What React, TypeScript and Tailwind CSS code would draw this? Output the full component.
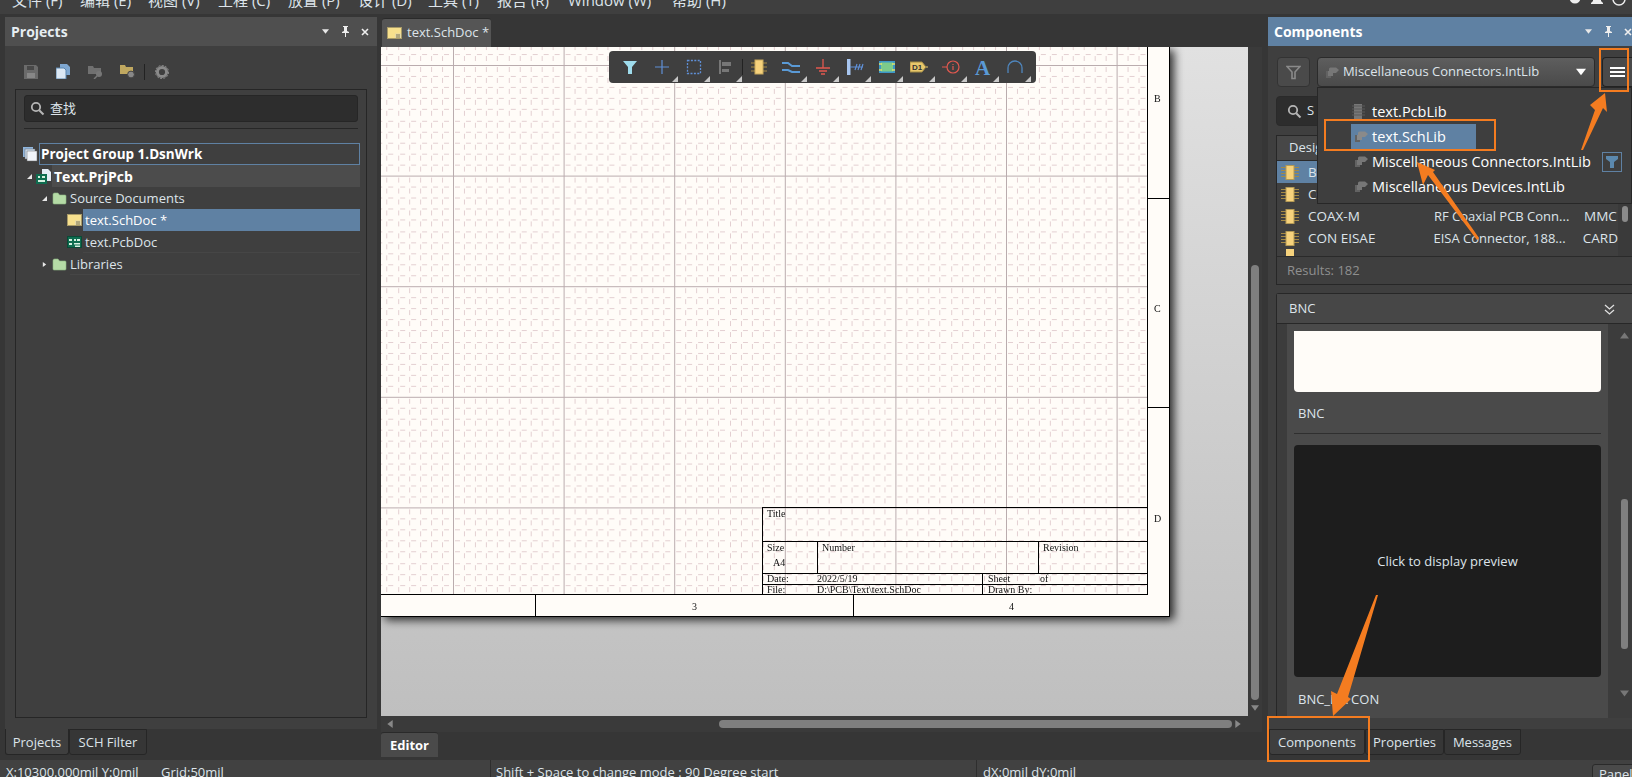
import React from "react";

const Tri = ({ dir, c = "#e8e8e8", s = 6 }: { dir: "down" | "right" | "se" | "left" | "up"; c?: string; s?: number }) => {
  const pts = { down: "0,1 6,1 3,5", right: "1,0 5,3 1,6", se: "6,0 6,6 0,6", left: "5,0 1,3 5,6", up: "0,5 6,5 3,1" }[dir];
  return (
    <svg width={s} height={s} viewBox="0 0 6 6" className="shrink-0">
      <polygon points={pts} fill={c} />
    </svg>
  );
};

const Folder = () => (
  <svg width="15" height="13" viewBox="0 0 15 13" className="shrink-0">
    <path d="M1 2.5 Q1 1 2.5 1 H6 L7.5 3 H13 Q14 3 14 4 V11 Q14 12 13 12 H2 Q1 12 1 11 Z" fill="#b5dba6" stroke="#8fb884" strokeWidth=".6" />
  </svg>
);
const SchDoc = ({ w = 15 }: { w?: number }) => (
  <svg width={w} height={(w * 12) / 15} viewBox="0 0 15 12" className="shrink-0">
    <rect x=".5" y=".5" width="14" height="11" fill="#f7e08d" stroke="#a89a68" />
    <rect x="8" y="6.5" width="6" height="4.5" fill="#d9d4bd" opacity=".6" />
    <path d="M9 8h4M9 10h4" stroke="#7d7550" strokeWidth="1" />
  </svg>
);
const PcbDoc = () => (
  <svg width="15" height="12" viewBox="0 0 15 12" className="shrink-0">
    <rect x=".5" y=".5" width="14" height="11" fill="#0f6d50" stroke="#0a4a36" />
    <path d="M2 3h3v2H2zM2 7h3v2H2zM7 3h2v2H7zM10 3h3v2h-3zM7 7h6v1.5H7zM8 9.5h5V11H8z" fill="#d6f0e0" />
  </svg>
);
const Lib = ({ c = "#777" }: { c?: string }) => (
  <svg width="15" height="13" viewBox="0 0 15 13" className="shrink-0">
    <path d="M1 5 H6 V12 H1 Z" fill="#626262" />
    <path d="M4 3 Q4 1.5 5.5 1.5 H11 L14 4 L11 7 H5.5 Q4 7 4 6 Z" fill={c} />
    <path d="M3 5 H8 V10 H3 Z" fill={c} />
  </svg>
);
const Part = () => (
  <svg width="18" height="15" viewBox="0 0 18 15" className="shrink-0">
    <path d="M0 2.5h18M0 5.5h18M0 8.5h18M0 11.5h18" stroke="#a58a45" strokeWidth="1" />
    <rect x="5" y=".5" width="8" height="14" fill="#f6d27c" stroke="#b59a55" />
  </svg>
);
const Search = () => (
  <svg width="15" height="15" viewBox="0 0 15 15" className="shrink-0">
    <circle cx="6" cy="6" r="4.2" fill="none" stroke="#b5b5b5" strokeWidth="1.8" />
    <path d="M9.2 9.2 13.5 13.5" stroke="#b5b5b5" strokeWidth="2" />
  </svg>
);
const Funnel = ({ c = "#8a8a8a" }: { c?: string }) => (
  <svg width="15" height="15" viewBox="0 0 15 15">
    <path d="M1 1.5h13L9 7v6.5H6V7Z" fill="none" stroke={c} strokeWidth="1.6" />
  </svg>
);
const HeadBtns = () => (
  <div className="flex items-center">
    <div className="flex w-[20px] justify-center"><Tri dir="down" s={7} /></div>
    <div className="flex w-[20px] justify-center">
      <svg width="9" height="11" viewBox="0 0 9 11"><path d="M2 0h5v1H6v4l2 1v1H5v4H4V7H1V6l2-1V1H2z" fill="#eee" /></svg>
    </div>
    <div className="flex w-[20px] justify-center">
      <svg width="8" height="8" viewBox="0 0 8 8"><path d="M1 1 7 7M7 1 1 7" stroke="#eee" strokeWidth="1.6" /></svg>
    </div>
  </div>
);

const toolbar: { el: React.ReactNode; tri: boolean }[] = [
  { tri: false, el: <path d="M2 3h14l-5 6v7H7V9Z" fill="#9fdcec" /> },
  { tri: true, el: <path d="M9 2v14M2 9h14" stroke="#5f8fd6" strokeWidth="1.2" /> },
  { tri: true, el: <rect x="2.5" y="2.5" width="13" height="13" fill="none" stroke="#5f8fd6" strokeWidth="1.3" strokeDasharray="2 1.4" /> },
  { tri: true, el: <g><path d="M3 2v14" stroke="#777" strokeWidth="2" /><path d="M5 4h9v4H5zM5 11h7v3H5z" fill="#777" /></g> },
  { tri: false, el: <g><path d="M1 5h16M1 9h16M1 13h16" stroke="#a58a45" /><rect x="5" y="2" width="8" height="14" fill="#f6d27c" stroke="#c7a85c" /></g> },
  { tri: true, el: <g fill="none" stroke="#5a9ad6" strokeWidth="2"><path d="M0 5h6l4 3h8" /><path d="M0 12h6l4 2h8" /></g> },
  { tri: true, el: <path d="M9 1v9M2 10h14M5 13h8M7 16h4" stroke="#e2584f" strokeWidth="1.3" fill="none" /> },
  { tri: true, el: <g><rect x="1" y="1" width="3.5" height="16" fill="#a8c6f0" /><path d="M4 9h13M9 12l2-6M12 12l2-6M15 12l2-6" stroke="#5f8fd6" strokeWidth="1.2" /></g> },
  { tri: true, el: <g><rect x="1" y="3" width="16" height="12" fill="#3d97c7" /><rect x="3" y="4.5" width="12" height="9" fill="#7ccb8a" /><path d="M1 6h3M1 12h3M14 6h3M14 12h3" stroke="#dfe36a" strokeWidth="1.4" /></g> },
  { tri: true, el: <g><path d="M0 4h12l4 5-4 5H0Z" fill="#e8c76b" stroke="#a18a45" /><path d="M16 9h2" stroke="#e8c76b" /><text x="2" y="12" fontSize="8" fontWeight="700" fill="#333" fontFamily="Liberation Sans">D1</text></g> },
  { tri: true, el: <g fill="none" stroke="#e2584f" strokeWidth="1.2"><circle cx="11" cy="9" r="6" /><path d="M0 9h5M11 6v1M11 8v4" /></g> },
  { tri: true, el: <text x="1" y="17" fontSize="21" fontWeight="700" fill="#5a9ad6" fontFamily="Liberation Serif">A</text> },
  { tri: true, el: <path d="M2 15V10a7 7 0 0 1 14 0v5" fill="none" stroke="#4f86bd" strokeWidth="1.3" /> },
];

const Sheet = () => {
  const minors = Array.from({ length: 10 }, (_, i) => i * 11.06);
  return (
    <svg width="789" height="570" viewBox="0 0 789 570" className="block shrink-0 bg-[#fffcf8] drop-shadow-[4px_3px_5px_rgba(0,0,0,0.8)]">
      <defs>
        <pattern id="g" x="72" y="18" width="110.6" height="110.6" patternUnits="userSpaceOnUse">
          {minors.map((m) => (
            <g key={m} stroke="#e3cfd1" strokeWidth="1" strokeDasharray="5 6.06" shapeRendering="crispEdges">
              {m > 0 && <line x1="0" x2="110.6" y1={m + 0.5} y2={m + 0.5} strokeDashoffset="-2" />}
              {m > 0 && <line y1="0" y2="110.6" x1={m + 0.5} x2={m + 0.5} strokeDashoffset="-2" />}
            </g>
          ))}
          <path d="M0.5 0V110.6M0 0.5H110.6" stroke="#baacae" strokeWidth="1" fill="none" shapeRendering="crispEdges" />
        </pattern>
      </defs>
      <rect x="0" y="0" width="767" height="547" fill="url(#g)" />
      <g stroke="#000" strokeWidth="1" fill="none" shapeRendering="crispEdges">
        <path d="M766.5 0V547.5H0" />
        <path d="M788.5 0V569.5H0" />
        <path d="M766.5 151.5H789M766.5 360.5H789" />
        <path d="M154.5 547V570M472.5 547V570" />
        <rect x="381.5" y="460.5" width="385" height="87" fill="none" />
        <path d="M381.5 494.5H766.5M381.5 526.5H766.5M381.5 537.5H766.5M436.5 494.5V526.5M657.5 494.5V526.5M601.5 526.5V547.5" />
      </g>
      <g fontFamily="Liberation Serif" fontSize="10" fill="#111">
        <text x="773" y="55">B</text>
        <text x="773" y="265">C</text>
        <text x="773" y="475">D</text>
        <text x="311" y="563">3</text>
        <text x="628" y="563">4</text>
        <text x="386" y="470">Title</text>
        <text x="386" y="504">Size</text>
        <text x="392" y="519">A4</text>
        <text x="441" y="504">Number</text>
        <text x="662" y="504">Revision</text>
        <text x="386" y="535">Date:</text>
        <text x="436" y="535">2022/5/19</text>
        <text x="607" y="535">Sheet</text>
        <text x="659" y="535">of</text>
        <text x="386" y="546">File:</text>
        <text x="436" y="546">D:\PCB\Text\text.SchDoc</text>
        <text x="607" y="546">Drawn By:</text>
      </g>
    </svg>
  );
};

const menus = [
  ["文件 (F)", 68], ["编辑 (E)", 68], ["视图 (V)", 70], ["工程 (C)", 70], ["放置 (P)", 70], ["设计 (D)", 70], ["工具 (T)", 69], ["报告 (R)", 71], ["Window (W)", 104], ["帮助 (H)", 70],
] as const;

const rows: [string, string, string, boolean][] = [
  ["BNC", "BNC Elbow Connector", "BCN", true],
  ["COAX", "Coaxial Connector", "BCN", false],
  ["COAX-M", "RF Coaxial PCB Conn...", "MMC", false],
  ["CON EISAE", "EISA Connector, 188...", "CARD", false],
];

const TreeRow = ({ indent, children, className = "" }: { indent: string; children: React.ReactNode; className?: string }) => (
  <div className={`flex h-[22px] items-center ${indent} ${className}`}>{children}</div>
);

export default function App() {
  return (
    <div className="relative flex h-[777px] w-[1632px] flex-col overflow-hidden bg-[#363636] font-['Open_Sans','Noto_Sans_CJK_SC',sans-serif] text-[13px] text-[#dde4ea]">
      {/* menu */}
      <div className="flex h-[14px] items-start justify-between overflow-hidden bg-[#3f3f3f] pl-[12px] pr-[6px]">
        <div className="flex h-[18px] shrink-0 -translate-y-[9px] items-center text-[15px] leading-[18px]">
          {menus.map(([t, w]) => (
            <span key={t} style={{ width: w }} className="whitespace-nowrap">{t}</span>
          ))}
        </div>
        <div className="flex h-[14px] -translate-y-[3px] items-start gap-[8px]">
          <svg width="14" height="8" viewBox="0 0 14 8"><circle cx="7" cy="1" r="5.5" fill="#eee" /><circle cx="7" cy="1" r="2" fill="#3f3f3f" /></svg>
          <svg width="14" height="8" viewBox="0 0 14 8"><path d="M3 0h8v4l2 2v1H1V6l2-2z" fill="#eee" /></svg>
          <svg width="14" height="10" viewBox="0 0 14 10"><circle cx="7" cy="2" r="6" fill="none" stroke="#eee" strokeWidth="1.5" /></svg>
        </div>
      </div>

      <div className="mt-[3px] flex h-[743px]">
        {/* left */}
        <div className="ml-[5px] flex w-[372px] flex-col">
          <div className="flex h-[712px] flex-col bg-[#3f3f3f]">
            <div className="flex h-[29px] items-center justify-between bg-[#4f4f4f] pl-[6px] pr-[2px]">
              <span className="text-[14px] font-bold text-[#e6edf2]">Projects</span>
              <HeadBtns />
            </div>
            <div className="flex h-[43px] items-center pl-[19px] pt-[8px]">
              <svg width="14" height="14" viewBox="0 0 14 14" className="mr-[18px]"><path d="M0 0h12l2 2v12H0Z" fill="#6b6b6b" /><rect x="3" y="1" width="7" height="4" fill="#484848" /><rect x="3" y="8" width="8" height="5" fill="#888" /></svg>
              <svg width="14" height="15" viewBox="0 0 14 15" className="mr-[18px]"><path d="M4 0h7l3 3v8H4Z" fill="#7fa7d0" /><path d="M0 4h8l2 2v9H0Z" fill="#dce8f4" stroke="#5a86b0" /></svg>
              <svg width="16" height="14" viewBox="0 0 16 14" className="mr-[16px]"><path d="M0 1h5l1 2h7v6H0Z" fill="#707070" /><circle cx="11" cy="9" r="3" fill="#777" /><path d="M9 11l-3 3" stroke="#777" strokeWidth="1.5" /></svg>
              <svg width="16" height="15" viewBox="0 0 16 15" className="mr-[8px]"><path d="M0 1h5l1 2h7v7H0Z" fill="#c0a860" /><circle cx="11" cy="10.5" r="3.4" fill="#888" stroke="#444" /></svg>
              <div className="mr-[10px] h-[16px] w-px bg-[#222]" />
              <svg width="14" height="14" viewBox="0 0 14 14"><circle cx="7" cy="7" r="4.6" fill="none" stroke="#8a8a8a" strokeWidth="3" /><circle cx="7" cy="7" r="6.6" fill="none" stroke="#8a8a8a" strokeWidth="1" strokeDasharray="2 1.4" /></svg>
            </div>
            <div className="mx-[10px] mb-[11px] flex-1 border border-[#262626] pt-[5px]">
              <div className="mx-[8px] flex h-[27px] items-center gap-[5px] rounded-[3px] border border-[#262626] bg-[#2d2d2d] pl-[5px] text-[13px]">
                <Search /><span>查找</span>
              </div>
              <div className="mx-[8px] mt-[6px] h-px bg-[#272727]" />
              <div className="mt-[14px] pr-[6px]">
                <TreeRow indent="pl-[6px]" className="gap-[1px]">
                  <svg width="16" height="16" viewBox="0 0 16 16" className="shrink-0"><rect x="1" y="1" width="10" height="10" fill="#8fb5dc" /><rect x="3" y="3" width="10" height="10" fill="#cfe0f2" stroke="#666" strokeWidth=".5" /><rect x="5" y="5" width="10" height="10" fill="#f0f4fa" stroke="#666" strokeWidth=".5" /></svg>
                  <div className="flex h-[22px] flex-1 items-center border border-[#5f81a3] pl-[1px] text-[13.5px] font-bold text-white">Project Group 1.DsnWrk</div>
                </TreeRow>
                <TreeRow indent="pl-[11px]">
                  <span className="mr-[4px]"><Tri dir="se" s={5} /></span>
                  <svg width="15" height="15" viewBox="0 0 15 15" className="shrink-0"><path d="M6 0h6l3 3v9H6Z" fill="#e4ecf5" /><rect x="0" y="5" width="11" height="10" fill="#0f6d50" /><path d="M2 7h2v2H2zM6 7h3v2H6zM2 11h7v2H2z" fill="#d6f0e0" /></svg>
                  <div className="ml-[1px] flex h-[22px] flex-1 items-center bg-[#4c4c4c] pl-[2px] text-[14px] font-bold text-white">Text.PrjPcb</div>
                </TreeRow>
                <TreeRow indent="pl-[26px]">
                  <span className="mr-[5px]"><Tri dir="se" s={5} /></span>
                  <Folder />
                  <span className="ml-[3px] pt-[2px]">Source Documents</span>
                </TreeRow>
                <TreeRow indent="pl-[51px]">
                  <SchDoc />
                  <div className="ml-[1px] flex h-[22px] flex-1 items-center bg-[#5f81a3] pl-[2px] pt-[2px] text-white">text.SchDoc *</div>
                </TreeRow>
                <TreeRow indent="pl-[51px]">
                  <PcbDoc />
                  <div className="ml-[1px] flex h-[22px] flex-1 items-center border-b border-[#464646] pl-[2px] pt-[2px]">text.PcbDoc</div>
                </TreeRow>
                <TreeRow indent="pl-[26px]">
                  <span className="mr-[5px]"><Tri dir="right" s={5} /></span>
                  <Folder />
                  <div className="ml-[3px] flex h-[22px] flex-1 items-center border-b border-[#464646] pt-[2px]">Libraries</div>
                </TreeRow>
              </div>
            </div>
          </div>
          <div className="flex h-[26px]">
            <div className="flex w-[64px] items-center justify-center rounded-b-[3px] border border-t-0 border-[#262626] bg-[#3f3f3f] pt-[2px]">Projects</div>
            <div className="flex w-[78px] items-center justify-center rounded-b-[3px] border border-[#262626] bg-[#363636] pt-[2px]">SCH Filter</div>
          </div>
        </div>

        {/* center */}
        <div className="ml-[4px] flex w-[881px] flex-col">
          <div className="flex h-[30px] items-end">
            <div className="ml-[1px] flex h-[29px] w-[109px] items-center gap-[5px] rounded-t-[3px] border-t border-[#2a2a2a] bg-[#555] pl-[5px]">
              <SchDoc />
              <span className="whitespace-nowrap">text.SchDoc *</span>
            </div>
          </div>
          <div className="flex h-[669px]">
            <div className="relative w-[867px] overflow-hidden bg-gradient-to-b from-[#e1e1e1] to-[#bfbfbf]">
              <Sheet />
              <div className="absolute left-[228px] top-[4px] flex h-[32px] w-[427px] items-center rounded-[4px] bg-[#3f3f3f] pl-[5px]">
                {toolbar.map((t, i) => (
                  <React.Fragment key={i}>
                    {i === 4 && <div className="h-[16px] w-px shrink-0 bg-[#222]" />}
                    <div className="relative flex h-[32px] w-[32px] shrink-0 items-center justify-center">
                      <svg width="18" height="18" viewBox="0 0 18 18">{t.el}</svg>
                      {t.tri && <span className="absolute bottom-[1px] right-0 flex"><Tri dir="se" c="#c8c8c8" /></span>}
                    </div>
                  </React.Fragment>
                ))}
              </div>
            </div>
            <div className="flex w-[14px] flex-col items-center bg-[#3a3a3a]">
              <div className="mt-[218px] h-[435px] w-[8px] rounded-[4px] bg-[#7f7f7f]" />
              <div className="mt-[4px]"><Tri dir="down" c="#888" s={8} /></div>
            </div>
          </div>
          <div className="flex h-[16px] items-center bg-[#3a3a3a] pl-[5px]">
            <Tri dir="left" c="#888" s={8} />
            <div className="ml-[325px] h-[8px] w-[513px] rounded-[4px] bg-[#7f7f7f]" />
            <div className="ml-[2px]"><Tri dir="right" c="#888" s={8} /></div>
          </div>
          <div className="flex h-[25px] items-start bg-[#363636]">
            <div className="flex h-[25px] w-[57px] items-center justify-center rounded-t-[3px] border-t border-[#2a2a2a] bg-[#4a4a4a] pt-[1px] font-bold text-white">Editor</div>
          </div>
        </div>

        {/* right */}
        <div className="ml-[6px] flex w-[364px] flex-col overflow-hidden">
          <div className="flex h-[712px] flex-col bg-[#3f3f3f]">
            <div className="flex h-[29px] items-center justify-between bg-[#5f81a3] pl-[6px]">
              <span className="text-[14px] font-bold text-white">Components</span>
              <div className="-mr-[6px]"><HeadBtns /></div>
            </div>
            <div className="mt-[11px] flex h-[30px] pl-[9px]">
              <div className="flex w-[33px] items-center justify-center rounded-[4px] border border-[#333] bg-[#4a4a4a]"><Funnel /></div>
              <div className="ml-[7px] flex w-[279px] items-center rounded-[4px] border border-[#2b2b2b] bg-gradient-to-b from-[#5e5e5e] to-[#4a4a4a] pl-[7px] pr-[8px]">
                <Lib />
                <span className="ml-[3px] flex-1 whitespace-nowrap text-[13px]">Miscellaneous Connectors.IntLib</span>
                <Tri dir="down" s={10} c="#fff" />
              </div>
              <div className="ml-[7px] flex w-[30px] items-center justify-center rounded-l-[4px] border border-r-0 border-[#222] bg-[#4a4a4a]">
                <div className="flex w-[15px] flex-col gap-[2px]">
                  <div className="h-[2px] bg-white" /><div className="h-[2px] bg-white" /><div className="h-[2px] bg-white" />
                </div>
              </div>
            </div>
            <div className="ml-[8px] mt-[9px] flex h-[30px] items-center gap-[5px] rounded-l-[4px] border border-[#2a2a2a] bg-[#2d2d2d] pl-[10px]">
              <Search /><span>S</span>
            </div>
            <div className="ml-[8px] mt-[9px] flex h-[150px] flex-col border border-r-0 border-[#272727]">
              <div className="flex h-[25px] items-center border-b border-[#2a2a2a] bg-[#474747] pl-[12px]">Designator</div>
              <div className="flex h-[95px] overflow-hidden">
                <div className="w-[341px] overflow-hidden">
                  {rows.map(([a, b, c, sel]) => (
                    <div key={a} className={`flex h-[22px] items-center whitespace-nowrap pl-[4px] pt-[1px] ${sel ? "bg-[#5f81a3]" : ""}`}>
                      <Part />
                      <span className="ml-[9px] w-[126px] text-[13.5px]">{a}</span>
                      <span className="w-[150px]">{b}</span>
                      <span className="text-[13.5px]">{c}</span>
                    </div>
                  ))}
                  <div className="pl-[9px]"><div className="h-[7px] w-[8px] bg-[#f6d27c]" /></div>
                </div>
                <div className="flex flex-1 justify-center bg-[#3a3a3a]">
                  <div className="mt-[45px] h-[16px] w-[6px] rounded-[3px] bg-[#8a8a8a]" />
                </div>
              </div>
              <div className="flex flex-1 items-center border-t border-[#2a2a2a] pl-[10px] text-[#8f8f8f]">Results: 182</div>
            </div>
            <div className="ml-[8px] mt-[8px] flex h-[425px] flex-col rounded-tl-[3px] border-l border-t border-[#272727] bg-[#3c3c3c]">
              <div className="flex h-[30px] shrink-0 items-center justify-between border-b border-[#272727] bg-[#474747] pl-[12px] pr-[17px] pt-[1px]">
                <span>BNC</span>
                <svg width="11" height="11" viewBox="0 0 11 11"><path d="M1 1l4.5 4 4.5-4M1 6l4.5 4 4.5-4" fill="none" stroke="#e0e0e0" strokeWidth="1.3" /></svg>
              </div>
              <div className="flex min-h-0 flex-1">
                <div className="ml-[10px] flex w-[321px] flex-col overflow-hidden bg-[#4a4a4a] px-[7px] pt-[7px]">
                  <div className="h-[61px] shrink-0 rounded-b-[4px] bg-[#fffcf8]" />
                  <div className="flex h-[42px] shrink-0 items-center border-b border-[#2f2f2f] pl-[4px] pt-[3px]">BNC</div>
                  <div className="mt-[11px] flex h-[232px] shrink-0 items-center justify-center rounded-[4px] bg-[#1d1d1d] pt-[1px]">Click to display preview</div>
                  <div className="flex h-[45px] shrink-0 items-center pl-[4px]">BNC_DA CON</div>
                </div>
                <div className="flex flex-1 flex-col items-center pl-[9px] pt-[7px]">
                  <Tri dir="up" c="#777" s={9} />
                  <div className="mt-[159px] h-[150px] w-[7px] rounded-[3px] bg-[#7f7f7f]" />
                  <div className="mt-[40px]"><Tri dir="down" c="#777" s={9} /></div>
                </div>
              </div>
            </div>
          </div>
          <div className="flex h-[26px] pl-[1px]">
            <div className="flex w-[96px] items-center justify-center rounded-b-[3px] border border-[#262626] bg-[#3f3f3f] pt-[2px]">Components</div>
            <div className="flex w-[79px] items-center justify-center rounded-b-[3px] border border-[#262626] pt-[2px]">Properties</div>
            <div className="flex w-[77px] items-center justify-center rounded-b-[3px] border border-[#262626] pt-[2px]">Messages</div>
          </div>
        </div>
      </div>

      {/* status */}
      <div className="relative flex h-[17px] items-start overflow-hidden bg-[#414141] pl-[6px] leading-[18px]">
        <span className="w-[155px] shrink-0 whitespace-nowrap pt-[3px]">X:10300.000mil Y:0mil</span>
        <span className="w-[329px] shrink-0 whitespace-nowrap pt-[3px]">Grid:50mil</span>
        <span className="h-[17px] w-px shrink-0 bg-[#2e2e2e]" />
        <span className="ml-[5px] w-[480px] shrink-0 whitespace-nowrap pt-[3px]">Shift + Space to change mode : 90 Degree start</span>
        <span className="h-[17px] w-px shrink-0 bg-[#2e2e2e]" />
        <span className="ml-[6px] w-[609px] shrink-0 whitespace-nowrap pt-[3px]">dX:0mil dY:0mil</span>
        <span className="mt-[4px] h-[20px] w-[60px] shrink-0 rounded-t-[3px] border border-[#2a2a2a] bg-[#4a4a4a] pl-[6px]">Panels</span>
      </div>

      {/* dropdown */}
      <div className="absolute left-[1317px] top-[87px] h-[117px] w-[315px] border border-[#272727] bg-[#3e3e3e] pt-[11px] text-[14.5px] text-white">
        <div className="flex h-[25px] items-center pl-[33px]">
          <svg width="15" height="15" viewBox="0 0 15 15" className="shrink-0"><rect x="3" y="0" width="8" height="15" fill="#777" /><path d="M1 2h13M1 5h13M1 8h13M1 11h13" stroke="#5a5a5a" /></svg>
          <span className="ml-[6px]">text.PcbLib</span>
        </div>
        <div className="ml-[33px] flex h-[25px] w-[125px] items-center bg-[#5f81a3] pl-[3px]">
          <Lib c="#8a8a8a" /><span className="ml-[3px]">text.SchLib</span>
        </div>
        <div className="flex h-[25px] items-center pl-[36px]">
          <Lib /><span className="ml-[3px] w-[230px] whitespace-nowrap">Miscellaneous Connectors.IntLib</span>
          <span className="flex h-[20px] w-[20px] items-center justify-center border border-[#5f81a3]">
            <svg width="12" height="12" viewBox="0 0 12 12"><path d="M0 0h12v3L8 6v6H4V6L0 3Z" fill="#5b88ad" /></svg>
          </span>
        </div>
        <div className="flex h-[25px] items-center pl-[36px]">
          <Lib /><span className="ml-[3px] whitespace-nowrap">Miscellaneous Devices.IntLib</span>
        </div>
      </div>

      {/* annotations */}
      <div className="absolute left-[1324px] top-[119px] h-[32px] w-[172px] border-2 border-[#f47c20]" />
      <div className="absolute left-[1599px] top-[48px] h-[44px] w-[30px] border-2 border-[#f47c20]" />
      <div className="absolute left-[1267px] top-[716px] h-[46px] w-[103px] border-2 border-[#f47c20]" />
      <svg className="pointer-events-none absolute left-0 top-0" width="1632" height="777" viewBox="0 0 1632 777">
        <g fill="#f47c20">
          <polygon points="1581,150 1595,110 1590,105 1605,93 1607,112 1603,108 1583,150" />
          <polygon points="1477,240 1428,175 1423,185 1417,162 1435,170 1433,172 1479,238" />
          <polygon points="1378,595 1348,697 1351,699 1333,716 1331,691 1337,694 1376,595" />
        </g>
      </svg>
    </div>
  );
}
